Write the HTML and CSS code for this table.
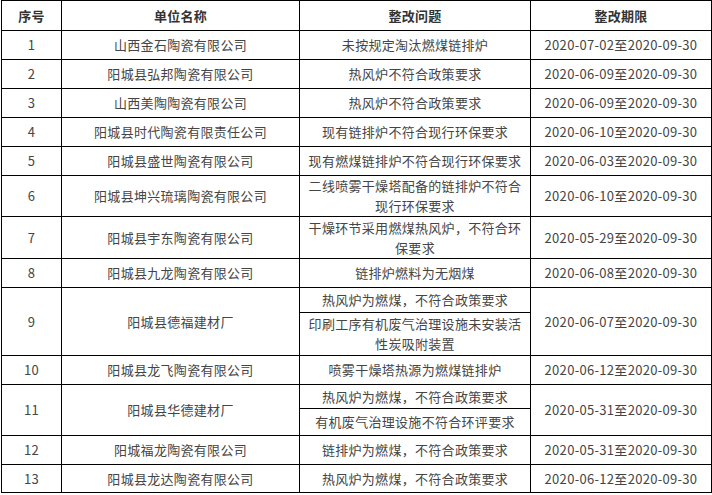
FILE: index.html
```html
<!DOCTYPE html>
<html lang="zh-CN">
<head>
<meta charset="utf-8">
<title>整改清单</title>
<link rel="stylesheet" href="styles.css">
</head>
<body>
<table class="list">
  <colgroup>
    <col class="c-no">
    <col class="c-name">
    <col class="c-issue">
    <col class="c-date">
  </colgroup>
  <thead>
    <tr class="h-head"><th>序号</th><th>单位名称</th><th>整改问题</th><th>整改期限</th></tr>
  </thead>
  <tbody>
    <tr class="h1"><td>1</td><td>山西金石陶瓷有限公司</td><td>未按规定淘汰燃煤链排炉</td><td>2020-07-02至2020-09-30</td></tr>
    <tr class="h1"><td>2</td><td>阳城县弘邦陶瓷有限公司</td><td>热风炉不符合政策要求</td><td>2020-06-09至2020-09-30</td></tr>
    <tr class="h1"><td>3</td><td>山西美陶陶瓷有限公司</td><td>热风炉不符合政策要求</td><td>2020-06-09至2020-09-30</td></tr>
    <tr class="h1"><td>4</td><td>阳城县时代陶瓷有限责任公司</td><td>现有链排炉不符合现行环保要求</td><td>2020-06-10至2020-09-30</td></tr>
    <tr class="h1"><td>5</td><td>阳城县盛世陶瓷有限公司</td><td>现有燃煤链排炉不符合现行环保要求</td><td>2020-06-03至2020-09-30</td></tr>
    <tr class="h2a"><td>6</td><td>阳城县坤兴琉璃陶瓷有限公司</td><td>二线喷雾干燥塔配备的链排炉不符合现行环保要求</td><td>2020-06-10至2020-09-30</td></tr>
    <tr class="h2b"><td>7</td><td>阳城县宇东陶瓷有限公司</td><td>干燥环节采用燃煤热风炉，不符合环保要求</td><td>2020-05-29至2020-09-30</td></tr>
    <tr class="h1"><td>8</td><td>阳城县九龙陶瓷有限公司</td><td>链排炉燃料为无烟煤</td><td>2020-06-08至2020-09-30</td></tr>
    <tr class="h9a"><td rowspan="2">9</td><td rowspan="2">阳城县德福建材厂</td><td>热风炉为燃煤，不符合政策要求</td><td rowspan="2">2020-06-07至2020-09-30</td></tr>
    <tr class="h9b"><td>印刷工序有机废气治理设施未安装活性炭吸附装置</td></tr>
    <tr class="h1"><td>10</td><td>阳城县龙飞陶瓷有限公司</td><td>喷雾干燥塔热源为燃煤链排炉</td><td>2020-06-12至2020-09-30</td></tr>
    <tr class="h11a"><td rowspan="2">11</td><td rowspan="2">阳城县华德建材厂</td><td>热风炉为燃煤，不符合政策要求</td><td rowspan="2">2020-05-31至2020-09-30</td></tr>
    <tr class="h11b"><td>有机废气治理设施不符合环评要求</td></tr>
    <tr class="h1"><td>12</td><td>阳城福龙陶瓷有限公司</td><td>链排炉为燃煤，不符合政策要求</td><td>2020-05-31至2020-09-30</td></tr>
    <tr class="h-last"><td>13</td><td>阳城县龙达陶瓷有限公司</td><td>热风炉为燃煤，不符合政策要求</td><td>2020-06-12至2020-09-30</td></tr>
  </tbody>
</table>
</body>
</html>
```

FILE: styles.css
```css
html, body {
  margin: 0;
  padding: 0;
  background: #fff;
}
body {
  padding: 0 0 0 1px;
}
.list {
  border-collapse: collapse;
  table-layout: fixed;
  width: 710px;
  font-family: "Noto Sans CJK SC", "Liberation Sans", sans-serif;
  font-size: 13px;
  color: #454545;
}
.c-no { width: 60px; }
.c-name { width: 238px; }
.c-issue { width: 231px; }
.c-date { width: 181px; }
.list th,
.list td {
  border: 1px solid #000;
  padding: 0 4px;
  text-align: center;
  vertical-align: middle;
  line-height: 20px;
  letter-spacing: 0.3px;
}
.list th {
  font-weight: bold;
  color: #333;
}
.h-head { height: 30px; }
.h1 { height: 29px; }
.h2a { height: 41px; }
.h2b { height: 42px; }
.h9a { height: 25px; }
.h9b { height: 43px; }
.h11a { height: 24px; }
.h11b { height: 27px; }
.h-last { height: 28px; }
```
